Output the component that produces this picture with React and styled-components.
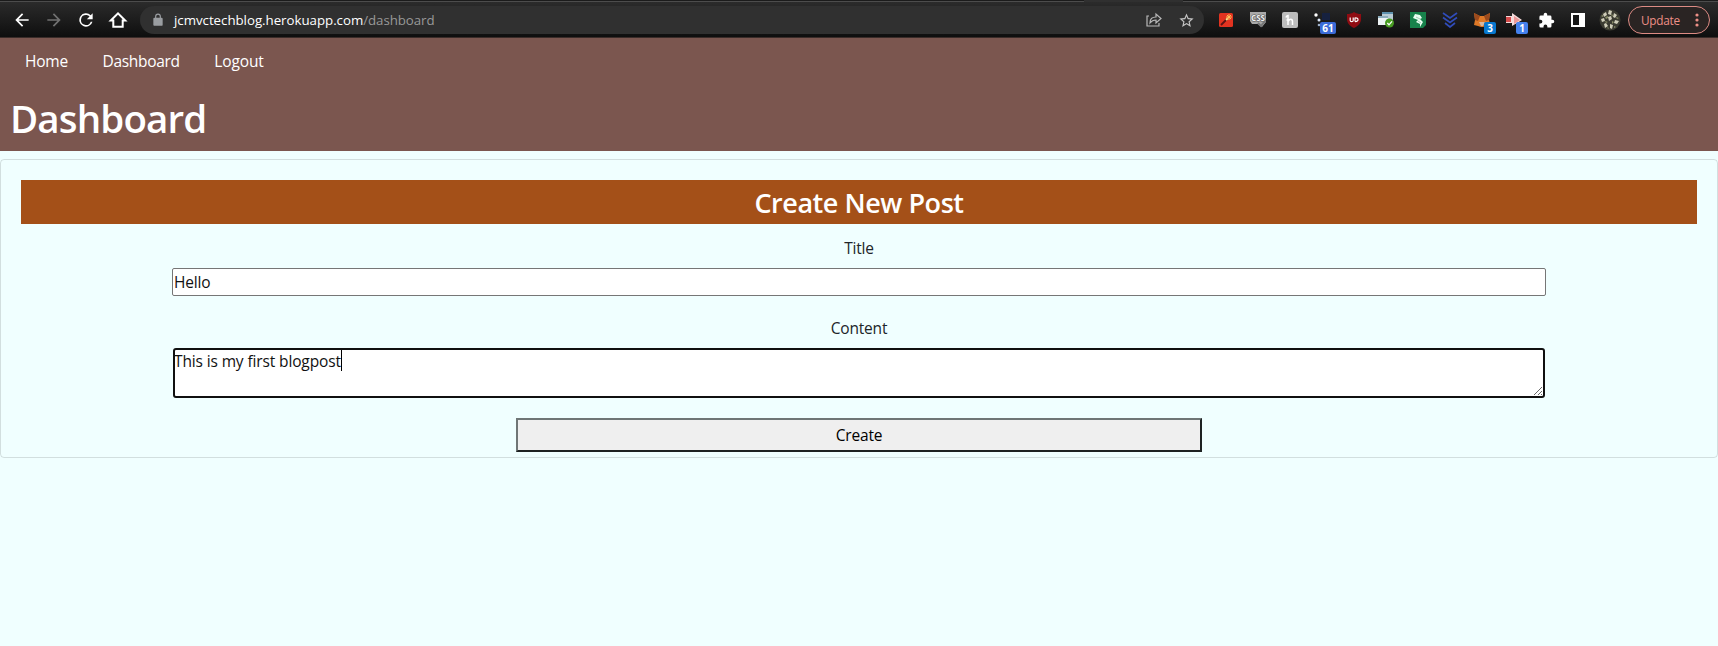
import React from "react";
import styled, { createGlobalStyle } from "styled-components";

const Global = createGlobalStyle`
  * { box-sizing: border-box; }
  html, body { margin: 0; padding: 0; background: #f0ffff; overflow: hidden; }
  body { font-family: "Open Sans", "Noto Sans", sans-serif; font-size: 16px; color: #212529; }
`;

const Page = styled.div`
  height: 646px;
  display: flex;
  flex-direction: column;
`;

const Toolbar = styled.div`
  height: 38px;
  display: flex;
  align-items: center;
  padding: 2px 8px 0 6px;
  background:
    linear-gradient(#303030, #303030) 1084px 0 / 99px 2px no-repeat,
    linear-gradient(#1b1b1b 0 1px, #4c4c4c 1px 2px, #2b2b2b 2px, #1e1e1e 18px, #0e0e0e 37px, #3a2c29 37px);
`;

const IconSlot = styled.span`
  position: relative;
  width: 32px;
  height: 32px;
  flex: none;
  display: flex;
  align-items: center;
  justify-content: center;
`;

const AddressBar = styled.div`
  width: 1064px;
  height: 28px;
  margin-left: 6px;
  margin-right: 6px;
  padding: 0 2px 0 11px;
  display: flex;
  align-items: center;
  border-radius: 14px;
  background: #303030;
`;

const Address = styled.div`
  flex: 1;
  margin-left: 9px;
  font-size: 13.3px;
  line-height: 20px;
  letter-spacing: -0.03px;
  color: #fff;
  white-space: nowrap;
`;

const Path = styled.span`
  color: #989898;
  letter-spacing: -0.07px;
`;

const Badge = styled.span`
  position: absolute;
  left: ${(p) => p.$left}px;
  top: 18px;
  width: ${(p) => p.$width}px;
  height: 12px;
  border-radius: 2px;
  background: ${(p) => p.$color};
  color: #fff;
  font-size: 10px;
  font-weight: 700;
  line-height: 12px;
  text-align: center;
`;

const UpdateButton = styled.div`
  width: 82px;
  height: 28px;
  margin-left: auto;
  padding: 0 8px 0 12px;
  display: flex;
  align-items: center;
  justify-content: space-between;
  border: 1px solid #dd8b84;
  border-radius: 14px;
  background: #2a2423;
  color: #ee8f87;
  font-size: 11.8px;
  line-height: 24px;
  letter-spacing: -0.25px;
`;

const Header = styled.header`
  height: 113px;
  background: #7b564f;
  color: #fff;
`;

const Nav = styled.nav`
  height: 46px;
  display: flex;
  align-items: center;
  gap: 34.5px;
  padding-left: 25px;
`;

const NavLink = styled.a`
  font-size: 15.5px;
  line-height: 24px;
  letter-spacing: ${(p) => p.$spacing}px;
  color: #fff;
`;

const Heading = styled.h1`
  margin: 10px 0 0 10px;
  font-size: 38.5px;
  font-weight: 600;
  line-height: 48px;
  letter-spacing: -0.85px;
`;

const Card = styled.main`
  height: 299px;
  margin-top: 8px;
  padding: 20px;
  border: 1px solid rgba(0, 0, 0, 0.125);
  border-radius: 4px;
  display: flex;
  flex-direction: column;
  align-items: center;
`;

const Banner = styled.h2`
  align-self: stretch;
  height: 44px;
  margin: 0;
  flex: none;
  background: #a45018;
  color: #fff;
  font-size: 27px;
  font-weight: 600;
  line-height: 45px;
  letter-spacing: -0.45px;
  text-align: center;
`;

const Label = styled.label`
  height: 24px;
  margin-top: ${(p) => p.$gap}px;
  margin-bottom: 8px;
  flex: none;
  font-size: 15.5px;
  line-height: 24px;
  letter-spacing: -0.2px;
`;

const TitleInput = styled.input`
  width: 1374px;
  height: 28px;
  flex: none;
  padding: 1px;
  border: 1px solid #767676;
  border-radius: 2px;
  background: #fff;
  color: #111;
  font: 15.5px/24px "Open Sans", sans-serif;
  letter-spacing: -0.2px;
`;

const ContentBox = styled.div`
  position: relative;
  width: 1372px;
  height: 50px;
  flex: none;
  border: 2px solid #101010;
  border-radius: 3px;
  background: #fff;
  color: #111;
  font-size: 15.5px;
  line-height: 22px;
  letter-spacing: -0.13px;
  display: flex;
  align-items: flex-start;
`;

const Content = styled.span`
  margin-left: -1px;
`;

const Caret = styled.span`
  width: 1px;
  height: 21px;
  background: #000;
`;

const Grip = styled.svg`
  position: absolute;
  right: 0;
  bottom: 0;
`;

const CreateButton = styled.button`
  width: 686px;
  height: 34px;
  margin-top: 20px;
  padding: 0;
  flex: none;
  border: 2px solid;
  border-color: #6f7676 #1e2222 #1e2222 #6f7676;
  background: #efefef;
  color: #000;
  font: 15.5px/24px "Open Sans", sans-serif;
  letter-spacing: -0.2px;
`;

const Material = ({ d, color = "#fff", size = 20 }) => (
  <svg width={size} height={size} viewBox="0 0 24 24" fill={color}>
    <path d={d} />
  </svg>
);

const extensions = [
  <svg width="16" height="16" viewBox="0 0 16 16">
    <rect x="1" y="1" width="14" height="14" rx="1.5" fill="#e23320" />
    <path d="m3 13 6-6" stroke="#5b1414" strokeWidth="1.8" />
    <path d="m8 8 2-2" stroke="#ffe08a" strokeWidth="1.8" />
    <path d="M11 2v6M8 5h6M9 3l4 4M13 3l-4 4" stroke="#ffc45a" strokeWidth=".9" />
  </svg>,
  <svg width="16" height="16" viewBox="0 0 16 16">
    <path d="M0 0h16v10l-4 5-4-3H2L0 9Z" fill="#a9a9a9" />
    <path d="m8 11 3 3 5-6" fill="none" stroke="#777" strokeWidth="2" />
    <text x="8" y="8.5" fontSize="8" fontWeight="700" fill="#f2f2f2" stroke="#555" strokeWidth="1.2" paintOrder="stroke" textAnchor="middle" textLength="14" lengthAdjust="spacingAndGlyphs">CSS</text>
  </svg>,
  <svg width="16" height="16" viewBox="0 0 16 16">
    <rect width="16" height="16" rx="2" fill="#bdbdbd" />
    <path d="M6 13V3.500q-1.500 0-2 2M6 9.500c1-3 4.500-3 4.500 0V13M4.500 8H8" fill="none" stroke="#fff" strokeWidth="1.500" />
  </svg>,
  <>
    <svg width="18" height="18" viewBox="0 0 18 18">
      <path d="M9 2h8v7H9Z" fill="#16213f" />
      <circle cx="3" cy="4" r="1.700" fill="#fff" />
      <circle cx="6" cy="9" r="1.500" fill="#dbe8fa" />
      <circle cx="6" cy="14" r="1.300" fill="#9fb2cc" />
    </svg>
    <Badge $left={14} $width={16} $color="#3b6bd8">61</Badge>
  </>,
  <svg width="16" height="16" viewBox="0 0 16 16">
    <path d="M8 0c2 1.500 4.500 2 7 2v5c0 4-2.500 7-7 9-4.500-2-7-5-7-9V2c2.500 0 5-.5 7-2Z" fill="#8f0c12" />
    <path d="M4.200 5.500v3c0 1.500 3 1.500 3 0v-3M9 5.500v4M9 6c4-.7 4 4 0 3.500" fill="none" stroke="#fff" strokeWidth="1.200" />
  </svg>,
  <svg width="18" height="16" viewBox="0 0 18 16">
    <path d="M5 0h11v9H5Z" fill="#b9cbd5" />
    <path d="M5 0h11v2H5Z" fill="#5e91ae" />
    <path d="M1 4h10v9H1Z" fill="#edf3f5" />
    <path d="M1 4h10v2H1Z" fill="#8cacbc" />
    <circle cx="12.500" cy="11" r="4.500" fill="#489c22" />
    <path d="m10.300 11 1.700 1.800 3-3.500" fill="none" stroke="#fff" strokeWidth="1.300" />
  </svg>,
  <svg width="16" height="16" viewBox="0 0 16 16">
    <path d="M0 0h16v13l-3 3H0Z" fill="#17824b" />
    <path d="m5 2 5 1 2 3-2 1 3 3-3 5v-3l-4-2 2-2-5-2Z" fill="#e9fff2" />
    <path d="m6 5 4 2M8 9l3 2" stroke="#a1cdb3" />
  </svg>,
  <svg width="16" height="16" viewBox="0 0 16 16">
    <path d="m1 1 7 5 7-5M1 5.500l7 5 7-5M3 11l5 4 5-4" fill="none" stroke="#304cba" strokeWidth="1.700" />
  </svg>,
  <>
    <svg width="18" height="16" viewBox="0 0 18 16">
      <path d="m1 1 6 3h4l6-3-1 7 1 4-4 2-3 1H8l-3-1-4-1 1-5Z" fill="#df7927" />
      <path d="m1 1 6 3-2 5-3-1ZM17 1l-6 3 2 5 3-1Z" fill="#9b4a1d" />
      <path d="M6 10h6l-2 4H8Z" fill="#d7b79d" />
    </svg>
    <Badge $left={18} $width={12} $color="#0878cf">3</Badge>
  </>,
  <>
    <svg width="18" height="16" viewBox="0 0 18 16">
      <path d="M1 4h6V1l10 7-10 6v-3H1Z" fill="#f5dcdc" />
      <path d="M1 5h5v5H1Z" fill="#d54b4b" />
      <path d="M9 4v8l6-4Z" fill="#ed9898" />
    </svg>
    <Badge $left={18} $width={12} $color="#4481ee">1</Badge>
  </>,
  <Material size={17} d="M20.500 11H19V7a2 2 0 0 0-2-2h-4V3.500a2.500 2.500 0 0 0-5 0V5H4a2 2 0 0 0-2 2v3.800h1.500a2.700 2.700 0 0 1 0 5.400H2V20a2 2 0 0 0 2 2h3.800v-1.500a2.700 2.700 0 0 1 5.400 0V22H17a2 2 0 0 0 2-2v-4h1.500a2.500 2.500 0 0 0 0-5Z" />,
  <svg width="14" height="14" viewBox="0 0 14 14">
    <path d="M0 0h14v14H0Z" fill="#fff" />
    <path d="M2 2h6v10H2Z" fill="#171717" />
  </svg>,
  <svg width="22" height="22" viewBox="0 0 22 22">
    <circle cx="11" cy="11" r="10.500" fill="#3b3b31" />
    <path d="M4 5l3-2 1 3-3 2ZM10 1l3 1-1 4-3-1ZM15 4l3 2-2 3-2-1ZM2 10l3-1 1 3-3 1ZM9 8l3-1 1 3-3 2ZM16 11l4 1-2 3-3-1ZM5 15l2-1 2 3-3 2ZM11 15l3 1-1 4-2-1Z" fill="#cfcdb8" />
    <path d="M6 8l3-1v2l-2 1ZM12 5l2 1-1 2ZM13 12l2 1-2 2ZM6 12l3 1-2 1ZM2 7l2-1v2ZM17 8l3 1-2 1ZM9 18l1 2-2-1ZM15 17l2 1-2 1Z" fill="#8a8e69" />
  </svg>,
];

const navItems = [
  ["Home", -0.2],
  ["Dashboard", -0.3],
  ["Logout", -0.12],
];

export default function App() {
  return (
    <Page>
      <Global />
      <Toolbar>
        <IconSlot><Material d="M20 11H7.830l5.590-5.590L12 4l-8 8 8 8 1.410-1.410L7.830 13H20v-2z" /></IconSlot>
        <IconSlot><Material color="#717171" d="m12 4-1.410 1.410L16.170 11H4v2h12.170l-5.580 5.590L12 20l8-8z" /></IconSlot>
        <IconSlot><Material d="M17.650 6.350A8 8 0 1 0 19.730 14h-2.080A6 6 0 1 1 12 6c1.660 0 3.140.69 4.220 1.780L13 11h7V4z" /></IconSlot>
        <IconSlot>
          <svg width="20" height="20" viewBox="0 0 20 20" fill="none" stroke="#fff" strokeWidth="2">
            <path d="M2.800 10.500 10 3.300l7.200 7.200h-2.500v6.200H5.300v-6.200Z" />
          </svg>
        </IconSlot>
        <AddressBar>
          <Material size={14} color="#9a9da1" d="M18 8h-1V6A5 5 0 0 0 7 6v2H6a2 2 0 0 0-2 2v10c0 1.100.9 2 2 2h12a2 2 0 0 0 2-2V10a2 2 0 0 0-2-2ZM9 6a3 3 0 0 1 6 0v2H9Z" />
          <Address>jcmvctechblog.herokuapp.com<Path>/dashboard</Path></Address>
          <IconSlot>
            <svg width="16" height="16" viewBox="0 0 16 16" fill="none" stroke="#b9b9b9" strokeWidth="1.200">
              <path d="M3 4H1v10h12v-3M4 11c0-4 2-6 6-6V2l5 4.500-5 4.500V8c-3 0-4.500 1-6 3Z" />
            </svg>
          </IconSlot>
          <IconSlot>
            <Material size={17} color="#c5c5c5" d="m22 9.240-7.190-.62L12 2 9.190 8.630 2 9.240l5.460 4.730L5.820 21 12 17.270 18.180 21l-1.630-7.030zM12 15.400l-3.760 2.270 1-4.280-3.320-2.880 4.380-.38L12 6.100l1.710 4.040 4.380.38-3.320 2.880 1 4.280z" />
          </IconSlot>
        </AddressBar>
        {extensions.map((icon, i) => <IconSlot key={i}>{icon}</IconSlot>)}
        <UpdateButton>
          Update
          <svg width="8" height="16" viewBox="0 0 8 16" fill="#ee8f87">
            <circle cx="4" cy="3" r="1.600" /><circle cx="4" cy="8" r="1.600" /><circle cx="4" cy="13" r="1.600" />
          </svg>
        </UpdateButton>
      </Toolbar>
      <Header>
        <Nav>
          {navItems.map(([name, spacing]) => <NavLink key={name} $spacing={spacing}>{name}</NavLink>)}
        </Nav>
        <Heading>Dashboard</Heading>
      </Header>
      <Card>
        <Banner>Create New Post</Banner>
        <Label $gap={12}>Title</Label>
        <TitleInput defaultValue="Hello" />
        <Label $gap={20}>Content</Label>
        <ContentBox>
          <Content>This is my first blogpost</Content>
          <Caret />
          <Grip width="10" height="10" viewBox="0 0 10 10" stroke="#444" strokeWidth=".8">
            <path d="m1 9 8-8M5 9l4-4M8 9l1-1" />
          </Grip>
        </ContentBox>
        <CreateButton>Create</CreateButton>
      </Card>
    </Page>
  );
}
